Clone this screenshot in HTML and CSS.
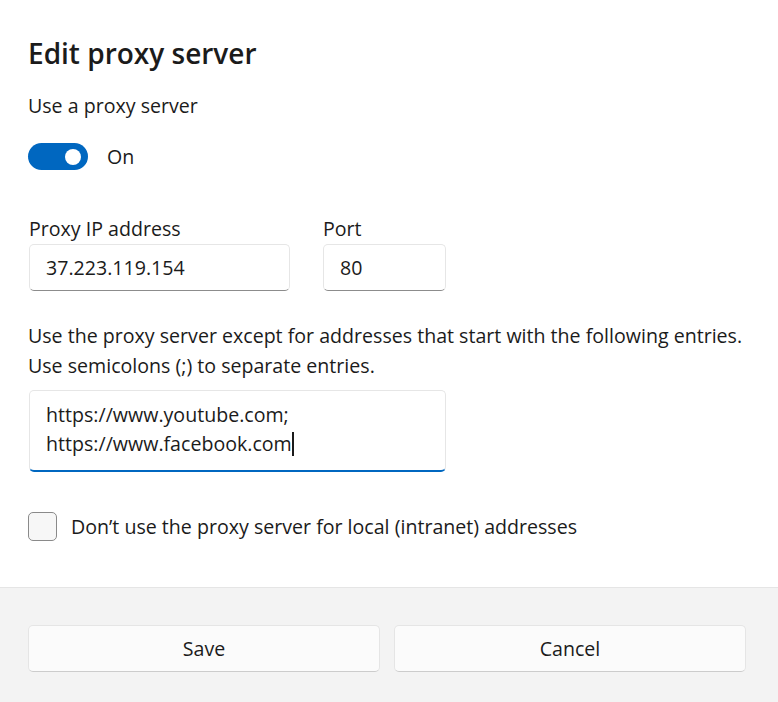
FILE: index.html
```html
<!DOCTYPE html>
<html lang="en">
<head>
<meta charset="utf-8">
<title>Edit proxy server</title>
<link rel="stylesheet" href="styles.css">
</head>
<body>
<div class="dialog">
  <div class="content">
    <h1 class="title">Edit proxy server</h1>
    <p class="label-main">Use a proxy server</p>
    <div class="toggle-row">
      <span class="toggle"><span class="knob"></span></span>
      <span class="toggle-text">On</span>
    </div>
    <div class="fields">
      <div class="field field-ip">
        <div class="field-label">Proxy IP address</div>
        <div class="textbox">37.223.119.154</div>
      </div>
      <div class="field field-port">
        <div class="field-label">Port</div>
        <div class="textbox">80</div>
      </div>
    </div>
    <p class="desc">Use the proxy server except for addresses that start with the following entries.<br>Use semicolons (;) to separate entries.</p>
    <div class="textarea">https://www.youtube.com;<br>https://www.facebook.com<span class="caret"></span></div>
    <div class="check-row">
      <span class="checkbox"></span>
      <span class="check-text">Don’t use the proxy server for local (intranet) addresses</span>
    </div>
  </div>
  <div class="footer">
    <button class="btn">Save</button>
    <button class="btn">Cancel</button>
  </div>
</div>
</body>
</html>
```
FILE: styles.css
```css
html, body {
  margin: 0;
  padding: 0;
  background: #ffffff;
}
body {
  font-family: "Segoe UI", "Open Sans", "Noto Sans", sans-serif;
  color: #1b1b1b;
  font-size: 19.6px;
}
.dialog {
  width: 778px;
  height: 702px;
  display: flex;
  flex-direction: column;
}
.content {
  padding: 35px 20px 0 28px;
  height: 587px;
  box-sizing: border-box;
  flex: none;
}
.title {
  margin: 0;
  font-size: 28px;
  font-weight: 600;
  line-height: 36px;
}
.label-main {
  margin: 21px 0 0;
  line-height: 28px;
}
.toggle-row {
  margin-top: 23px;
  display: flex;
  align-items: center;
  height: 27px;
}
.toggle {
  width: 60px;
  height: 27px;
  border-radius: 14px;
  background: #0067c0;
  display: flex;
  align-items: center;
  justify-content: flex-end;
  padding-right: 7px;
  box-sizing: border-box;
}
.knob {
  width: 16px;
  height: 16px;
  border-radius: 50%;
  background: #ffffff;
}
.toggle-text {
  margin-left: 19px;
  line-height: 28px;
}
.fields {
  margin-top: 45px;
  display: flex;
  gap: 32px;
}
.field-label {
  line-height: 28px;
  margin-left: 1px;
}
.textbox {
  margin-top: 1px;
  height: 47px;
  box-sizing: border-box;
  border: 1px solid #e6e6e6;
  border-bottom-color: #8c8c8c;
  border-radius: 5px;
  padding: 0 16px;
  display: flex;
  align-items: center;
  margin-left: 1px;
}
.field-ip .textbox { width: 261px; }
.field-port .textbox { width: 123px; }
.desc {
  margin: 30px 0 0;
  line-height: 30px;
}
.textarea {
  margin-top: 9px;
  margin-left: 1px;
  width: 417px;
  height: 82px;
  box-sizing: border-box;
  border: 1px solid #e6e6e6;
  border-bottom: 2px solid #0067c0;
  border-radius: 5px;
  padding: 9px 16px 0;
  line-height: 29px;
}
.caret {
  display: inline-block;
  width: 2px;
  height: 24px;
  background: #1b1b1b;
  vertical-align: -5px;
}
.check-row {
  margin-top: 40px;
  display: flex;
  align-items: center;
}
.checkbox {
  width: 29px;
  height: 29px;
  box-sizing: border-box;
  border: 1.5px solid #8a8a8a;
  border-radius: 5px;
  background: #f7f7f7;
}
.check-text {
  margin-left: 14px;
  line-height: 28px;
}
.footer {
  flex: 1;
  background: #f3f3f3;
  border-top: 1px solid #e5e5e5;
  padding: 37px 32px 0 28px;
  display: flex;
  gap: 14px;
  align-items: flex-start;
}
.btn {
  flex: 1;
  height: 47px;
  font: inherit;
  color: #1b1b1b;
  background: #fbfbfb;
  border: 1px solid #e5e5e5;
  border-bottom-color: #cccccc;
  border-radius: 5px;
}
```
